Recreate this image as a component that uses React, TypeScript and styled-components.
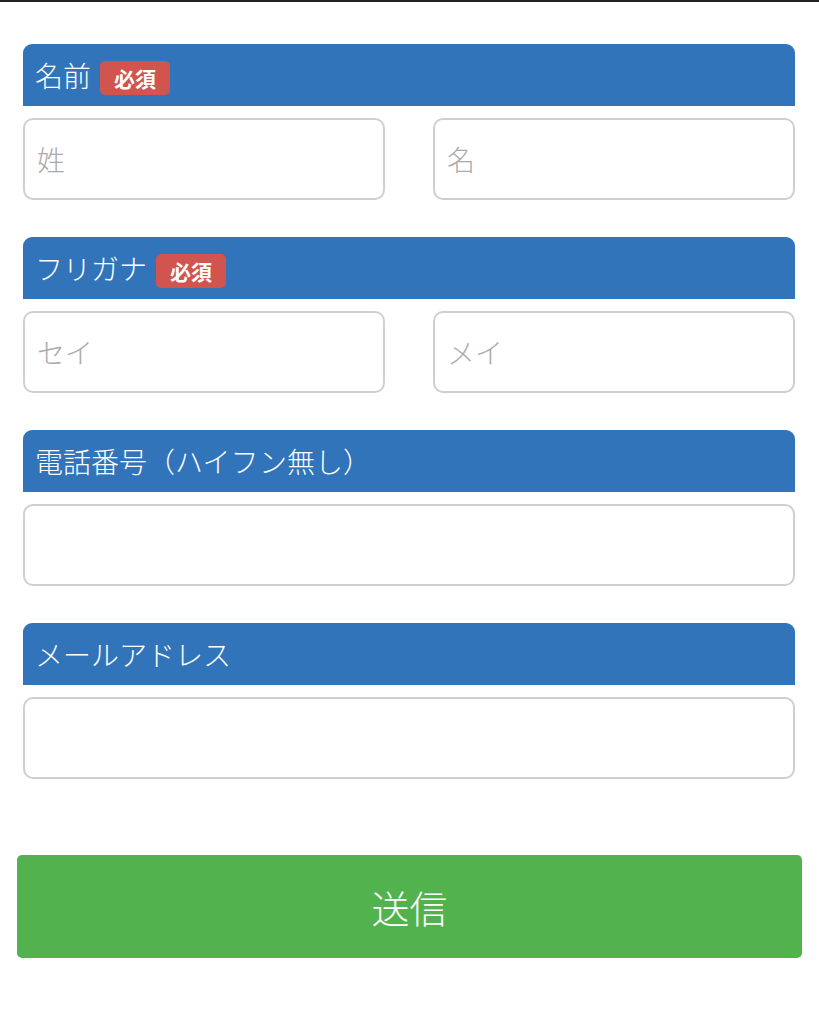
import React from "react";
import styled, { createGlobalStyle } from "styled-components";

const Global = createGlobalStyle`
  html, body { margin: 0; padding: 0; background: #fff; }
  body { font-family: "Noto Sans CJK JP", "Noto Sans", sans-serif; }
  * { box-sizing: border-box; }
`;

const TopRule = styled.div`
  height: 2px;
  background: #222;
`;

const Form = styled.form`
  display: flex;
  flex-direction: column;
  padding: 42px 24px 0 23px;
`;

const Section = styled.div`
  display: flex;
  flex-direction: column;
  gap: 12px;
  margin-bottom: 37px;
`;

const Header = styled.div`
  height: 62px;
  background: #3174b9;
  border-radius: 9px 9px 0 0;
  display: flex;
  align-items: center;
  gap: 9px;
  padding-left: 12px;
  color: #fff;
  font-size: 28px;
  font-weight: 300;
  line-height: 1;
`;

const Badge = styled.span`
  background: #d1544f;
  color: #fff;
  font-size: 21px;
  font-weight: 700;
  border-radius: 5px;
  height: 34px;
  margin-top: 6px;
  padding: 0 14px;
  display: inline-flex;
  align-items: center;
`;

const Row = styled.div<{ $cols: number }>`
  display: grid;
  grid-template-columns: repeat(${(p) => p.$cols}, 1fr);
  column-gap: 48px;
`;

const Input = styled.input`
  height: 82px;
  width: 100%;
  border: 2px solid #cfcfcf;
  border-radius: 10px;
  padding: 0 12px;
  font-family: inherit;
  font-size: 28px;
  font-weight: 300;
  color: #333;
  outline: none;
  &::placeholder { color: #ababab; }
`;

const Submit = styled.button`
  margin: 39px -7px 0 -6px;
  height: 103px;
  background: #52b24d;
  border: none;
  border-radius: 5px;
  color: #fff;
  font-family: inherit;
  font-size: 38px;
  font-weight: 300;
  cursor: pointer;
`;

type Field = { label: string; required?: boolean; placeholders: string[] };

const fields: Field[] = [
  { label: "名前", required: true, placeholders: ["姓", "名"] },
  { label: "フリガナ", required: true, placeholders: ["セイ", "メイ"] },
  { label: "電話番号（ハイフン無し）", placeholders: [""] },
  { label: "メールアドレス", placeholders: [""] },
];

export default function App() {
  return (
    <>
      <Global />
      <TopRule />
      <Form onSubmit={(e) => e.preventDefault()}>
        {fields.map((f) => (
          <Section key={f.label}>
            <Header>
              <span>{f.label}</span>
              {f.required && <Badge>必須</Badge>}
            </Header>
            <Row $cols={f.placeholders.length}>
              {f.placeholders.map((p, i) => (
                <Input key={i} placeholder={p} />
              ))}
            </Row>
          </Section>
        ))}
        <Submit type="submit">送信</Submit>
      </Form>
    </>
  );
}
